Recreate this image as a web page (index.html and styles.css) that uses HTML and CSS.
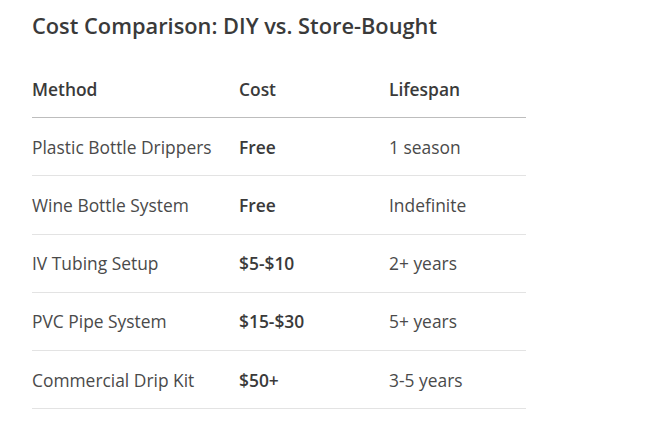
FILE: index.html
```html
<!DOCTYPE html>
<html>
<head>
<meta charset="utf-8">
<link rel="stylesheet" href="styles.css">
</head>
<body>
<div class="page">
  <h2 class="title">Cost Comparison: DIY vs. Store-Bought</h2>
  <table class="cmp">
    <thead>
      <tr><th class="c1">Method</th><th class="c2">Cost</th><th class="c3">Lifespan</th></tr>
    </thead>
    <tbody>
      <tr><td>Plastic Bottle Drippers</td><td class="cost">Free</td><td>1 season</td></tr>
      <tr><td>Wine Bottle System</td><td class="cost">Free</td><td>Indefinite</td></tr>
      <tr><td>IV Tubing Setup</td><td class="cost">$5-$10</td><td>2+ years</td></tr>
      <tr><td>PVC Pipe System</td><td class="cost">$15-$30</td><td>5+ years</td></tr>
      <tr><td>Commercial Drip Kit</td><td class="cost">$50+</td><td>3-5 years</td></tr>
    </tbody>
  </table>
</div>
</body>
</html>
```
FILE: styles.css
```css
html, body {
  margin: 0;
  padding: 0;
  background: #ffffff;
}
body {
  font-family: "Open Sans", "Noto Sans", sans-serif;
  color: #444444;
}
.page {
  padding: 11px 32px 0 32px;
}
.title {
  margin: 0;
  font-size: 21.8px;
  font-weight: 600;
  color: #3a3a3a;
  line-height: 30px;
}
.cmp {
  margin-top: 19px;
  border-collapse: collapse;
  width: 494px;
  table-layout: fixed;
}
.cmp th, .cmp td {
  padding: 0;
  text-align: left;
  vertical-align: middle;
  white-space: nowrap;
}
.cmp th {
  height: 57px;
  font-size: 17.4px;
  font-weight: 600;
  color: #3a3a3a;
  border-bottom: 1px solid #bdbdbd;
}
.cmp td {
  height: 57.25px;
  font-size: 17.4px;
  color: #4a4a4a;
  border-bottom: 1px solid #e3e3e3;
}
.cmp .c1 { width: 207px; }
.cmp .c2 { width: 150px; }
.cmp td.cost {
  font-weight: 600;
  color: #3a3a3a;
}
```
